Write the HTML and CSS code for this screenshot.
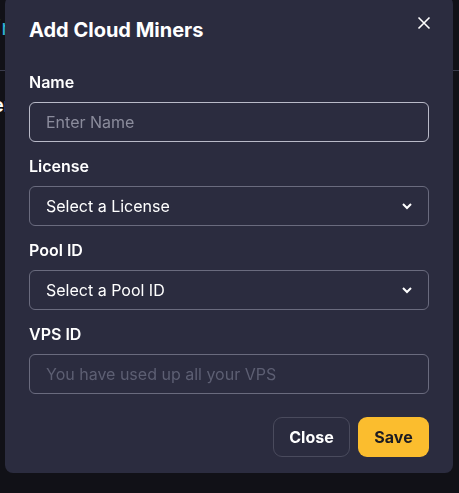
FILE: index.html
```html
<!DOCTYPE html>
<html>
<head>
<meta charset="utf-8">
<link rel="stylesheet" href="styles.css">
</head>
<body>
<div class="page">
  <div class="page-head"><span class="brand">Admin</span></div>
  <div class="page-row">
    <span class="row-title">Miner</span>
    <span class="row-sub">Account</span>
  </div>
</div>

<div class="backdrop">
  <div class="modal">
    <div class="modal-header">
      <h2 class="modal-title">Add Cloud Miners</h2>
      <button class="close-x" aria-label="Close">
        <svg width="14" height="14" viewBox="0 0 14 14"><path d="M1.5 1.5l11 11M12.5 1.5l-11 11" stroke="#ffffff" stroke-width="1.6" fill="none"/></svg>
      </button>
    </div>
    <div class="modal-body">
      <div class="field">
        <label class="label">Name</label>
        <div class="control focus"><span class="placeholder">Enter Name</span></div>
      </div>
      <div class="field">
        <label class="label">License</label>
        <div class="control select"><span class="value">Select a License</span>
          <svg class="chev" width="12" height="8" viewBox="0 0 12 8"><path d="M2 2l4 4 4-4" stroke="#ffffff" stroke-width="2" fill="none"/></svg>
        </div>
      </div>
      <div class="field">
        <label class="label">Pool ID</label>
        <div class="control select"><span class="value">Select a Pool ID</span>
          <svg class="chev" width="12" height="8" viewBox="0 0 12 8"><path d="M2 2l4 4 4-4" stroke="#ffffff" stroke-width="2" fill="none"/></svg>
        </div>
      </div>
      <div class="field">
        <label class="label">VPS ID</label>
        <div class="control disabled"><span class="placeholder dim">You have used up all your VPS</span></div>
      </div>
    </div>
    <div class="modal-footer">
      <button class="btn btn-close">Close</button>
      <button class="btn btn-save">Save</button>
    </div>
  </div>
</div>
</body>
</html>
```

FILE: styles.css
```css
* { box-sizing: border-box; }
html, body { margin: 0; padding: 0; }
body {
  width: 459px;
  height: 493px;
  overflow: hidden;
  background: #111117;
  font-family: Inter, Lato, sans-serif;
  color: #ffffff;
}
.page { width: 459px; }
.page-head {
  height: 71px;
  border-bottom: 1px solid #3a3b4c;
  padding-top: 14px;
}
.brand {
  display: block;
  margin-left: -52px;
  font-size: 22px;
  color: #2fb3d6;
}
.page-row { padding-top: 22px; margin-left: -44px; }
.row-title { display: block; font-size: 20px; font-weight: 600; line-height: 24px; }
.row-sub { display: block; font-size: 12px; color: #c9c9d4; line-height: 16px; margin-left: -8px; }

.backdrop {
  position: fixed;
  inset: 0;
}
.modal {
  position: absolute;
  left: 5px;
  top: -4px;
  width: 448px;
  height: 477px;
  background: #2b2c3f;
  border-radius: 8px;
  display: flex;
  flex-direction: column;
}
.modal-header {
  display: flex;
  justify-content: space-between;
  align-items: flex-start;
  padding: 20px 24px 0 24px;
}
.modal-title {
  margin: 0;
  font-size: 20px;
  line-height: 28px;
  font-weight: 700;
}
.close-x {
  background: none;
  border: 0;
  padding: 0;
  margin: 0 -2px 0 0;
  width: 14px;
  height: 14px;
  display: flex;
}
.modal-body {
  padding: 26px 24px 0 24px;
  display: flex;
  flex-direction: column;
  gap: 12px;
}
.field { display: flex; flex-direction: column; gap: 8px; }
.label {
  font-size: 16px;
  line-height: 24px;
  font-weight: 600;
}
.control {
  height: 40px;
  border: 1px solid #6a6b7e;
  border-radius: 6px;
  display: flex;
  align-items: center;
  justify-content: space-between;
  padding: 0 15px 0 16px;
  font-size: 16px;
}
.control.focus { border-color: #b9bac8; }
.placeholder { color: #8b8c9c; }
.placeholder.dim { color: #5d5f73; }
.value { color: #ffffff; }
.modal-footer {
  margin-top: auto;
  display: flex;
  justify-content: flex-end;
  gap: 8px;
  padding: 0 24px 16px 24px;
}
.btn {
  height: 40px;
  border-radius: 9px;
  font-family: inherit;
  font-size: 16px;
  font-weight: 700;
  padding: 0;
}
.btn-close {
  width: 77px;
  background: transparent;
  border: 1px solid #4a4b5d;
  color: #ffffff;
}
.btn-save {
  width: 71px;
  background: #fbbd2e;
  border: 0;
  color: #1c1c22;
}
```
